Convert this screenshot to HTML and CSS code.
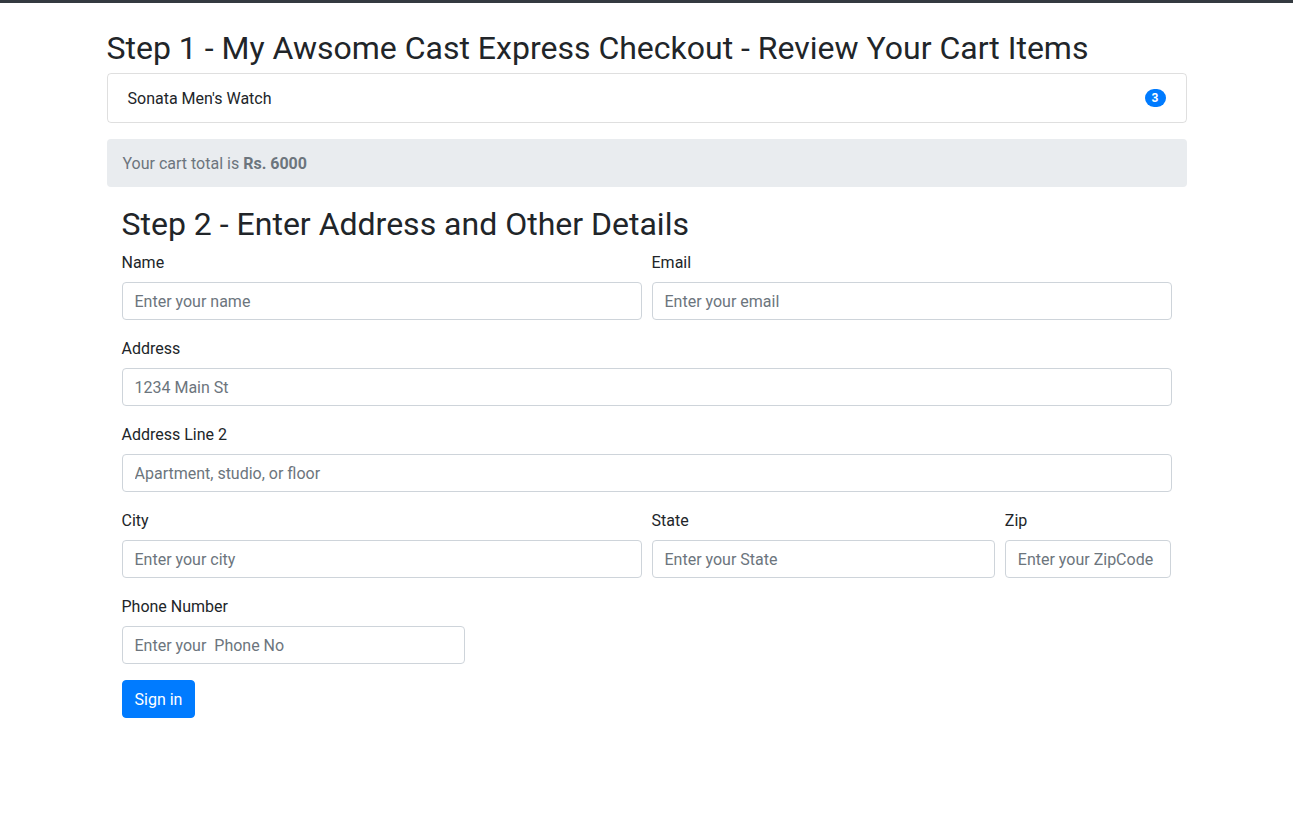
FILE: index.html
```html
<!DOCTYPE html>
<html lang="en">
<head>
<meta charset="utf-8">
<title>Checkout</title>
<link rel="stylesheet" href="styles.css">
</head>
<body>
<div class="topbar"></div>
<div class="container page">
  <h2 class="heading">Step 1 - My Awsome Cast Express Checkout - Review Your Cart Items</h2>
  <ul class="list-group">
    <li class="list-item">Sonata Men's Watch <span class="badge">3</span></li>
  </ul>
  <div class="total">Your cart total is <b>Rs. 6000</b></div>
  <div class="container inner">
    <h2 class="heading">Step 2 - Enter Address and Other Details</h2>
    <form class="form">
      <div class="form-row">
        <div class="form-group col-6">
          <label>Name</label>
          <input type="text" class="form-control" placeholder="Enter your name">
        </div>
        <div class="form-group col-6">
          <label>Email</label>
          <input type="email" class="form-control" placeholder="Enter your email">
        </div>
      </div>
      <div class="form-group">
        <label>Address</label>
        <input type="text" class="form-control" placeholder="1234 Main St">
      </div>
      <div class="form-group">
        <label>Address Line 2</label>
        <input type="text" class="form-control" placeholder="Apartment, studio, or floor">
      </div>
      <div class="form-row">
        <div class="form-group col-6">
          <label>City</label>
          <input type="text" class="form-control" placeholder="Enter your city">
        </div>
        <div class="form-group col-4">
          <label>State</label>
          <input type="text" class="form-control" placeholder="Enter your State">
        </div>
        <div class="form-group col-2">
          <label>Zip</label>
          <input type="text" class="form-control" placeholder="Enter your ZipCode">
        </div>
      </div>
      <div class="form-row">
        <div class="form-group col-4">
          <label>Phone Number</label>
          <input type="text" class="form-control" placeholder="Enter your  Phone No">
        </div>
      </div>
      <button type="button" class="btn">Sign in</button>
    </form>
  </div>
</div>
</body>
</html>
```
FILE: styles.css
```css
* { box-sizing: border-box; }
html, body { margin: 0; padding: 0; }
body {
  font-family: Roboto, "Liberation Sans", sans-serif;
  font-size: 16px;
  line-height: 1.5;
  color: #212529;
  background: #fff;
}
.topbar { height: 3px; background: #343a40; }
.container {
  width: 100%;
  max-width: 1110px;
  margin: 0 auto;
  padding: 0 15px;
}
.page { margin-top: 24px; margin-bottom: 24px; }
.inner { max-width: none; }
.heading {
  font-size: 32px;
  font-weight: 400;
  line-height: 1.2;
  margin: 0 0 6px;
  padding-top: 2px;
}
.list-group { list-style: none; margin: 0; padding: 0; }
.list-item {
  display: flex;
  justify-content: space-between;
  align-items: center;
  padding: 13px 20px 11px;
  border: 1px solid rgba(0,0,0,.125);
  border-radius: 4px;
}
.badge {
  display: inline-block;
  background: #007bff;
  color: #fff;
  font-size: 12px;
  font-weight: 700;
  line-height: 1;
  padding: 3px 7px;
  border-radius: 10rem;
  margin-top: -2px;
}
.total {
  margin: 16px 0;
  padding: 13px 16px 11px;
  background: #e9ecef;
  border-radius: 4px;
  color: #6c757d;
}
.total b { font-weight: 700; }
.form-row { display: flex; margin: 0 -5px; }
.form-row > .form-group { padding: 0 5px; }
.col-6 { flex: 0 0 50%; max-width: 50%; }
.col-4 { flex: 0 0 33.333333%; max-width: 33.333333%; }
.col-2 { flex: 0 0 16.666667%; max-width: 16.666667%; }
.form-group { margin-bottom: 16px; }
label { display: inline-block; margin-bottom: 7px; padding-top: 1px; }
.form-control {
  display: block;
  width: 100%;
  height: 38px;
  padding: 7px 12px 5px;
  font-family: inherit;
  font-size: 16px;
  line-height: 1.5;
  color: #495057;
  background: #fff;
  border: 1px solid #ced4da;
  border-radius: 4px;
}
.form-control::placeholder { color: #6c757d; opacity: 1; }
.btn {
  font-family: inherit;
  font-size: 16px;
  line-height: 1.5;
  padding: 7px 12px 5px;
  color: #fff;
  background: #007bff;
  border: 1px solid #007bff;
  border-radius: 4px;
}
```
